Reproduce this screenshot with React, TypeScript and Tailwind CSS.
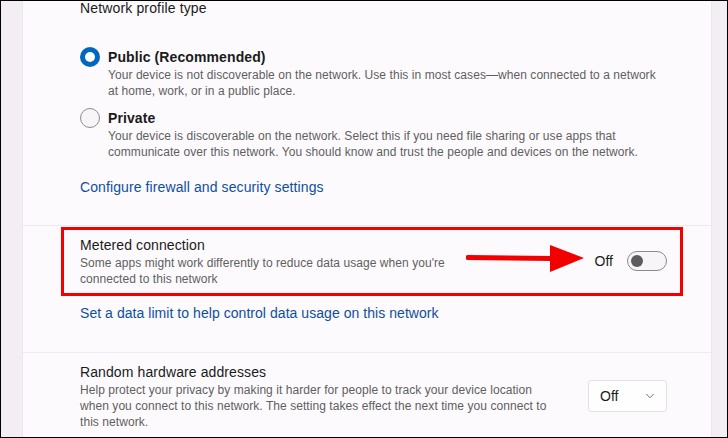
import React from 'react';
import { ChevronDown } from 'lucide-react';

const font = { fontFamily: '"Liberation Sans", Arial, sans-serif' };

const Radio: React.FC<{ checked?: boolean }> = ({ checked }) =>
  checked ? (
    <span className="flex h-5 w-5 shrink-0 items-center justify-center rounded-full bg-[#0067c0]">
      <span className="h-[10px] w-[10px] rounded-full bg-white" />
    </span>
  ) : (
    <span className="h-5 w-5 shrink-0 rounded-full border border-[#8d8d8d] bg-[#f7f5f7]" />
  );

const RadioOption: React.FC<{ checked?: boolean; title: string; lines: string[] }> = ({ checked, title, lines }) => (
  <div className="flex gap-2">
    <Radio checked={checked} />
    <div>
      <div className="text-[14px] leading-5 font-semibold tracking-[0.1px] text-[#1b1b1b]">{title}</div>
      {lines.map((l) => (
        <div key={l} className="text-[12px] leading-4 tracking-[0.06px] text-[#5f5f5f] whitespace-nowrap">{l}</div>
      ))}
    </div>
  </div>
);

export default function App() {
  return (
    <div style={font} className="flex h-[438px] w-[728px] overflow-hidden border border-black bg-[#f3eef4]">
      <div className="w-[21px] shrink-0" />
      <div className="flex w-[690px] shrink-0 flex-col border-x border-[#ece7ed] bg-[#fcfafc]">
        {/* profile type */}
        <div className="h-[224px] pl-[57px]">
          <div className="mt-[-3px] text-[14px] leading-5 tracking-[0.15px] text-[#1b1b1b]">Network profile type</div>
          <div className="mt-[29px]">
            <RadioOption
              checked
              title="Public (Recommended)"
              lines={[
                'Your device is not discoverable on the network. Use this in most cases\u2014when connected to a network',
                'at home, work, or in a public place.',
              ]}
            />
          </div>
          <div className="mt-[9px]">
            <RadioOption
              title="Private"
              lines={[
                'Your device is discoverable on the network. Select this if you need file sharing or use apps that',
                'communicate over this network. You should know and trust the people and devices on the network.',
              ]}
            />
          </div>
          <div className="mt-[17px] text-[14px] leading-5 tracking-[0.1px] text-[#0f4f9e]">Configure firewall and security settings</div>
        </div>
        <div className="h-px bg-[#efe9f0]" />

        {/* metered */}
        <div className="h-[126px] pl-[57px] pr-[44px]">
          <div className="relative mt-[8px] flex items-center pt-px">
            <div>
              <div className="text-[14px] leading-5 tracking-[0.1px] text-[#1b1b1b]">Metered connection</div>
              <div className="text-[12px] leading-4 tracking-[0.06px] text-[#5f5f5f]">
                Some apps might work differently to reduce data usage when you're
                <br />
                connected to this network
              </div>
            </div>
            <div className="ml-auto flex items-center gap-[14px]">
              <span className="text-[14px] leading-5 text-[#1b1b1b]">Off</span>
              <span className="flex h-5 w-10 items-center rounded-full border border-[#8a8a8a] bg-[#f7f5f7] pl-[3px]">
                <span className="h-3 w-3 rounded-full bg-[#5c5c5c]" />
              </span>
            </div>
            {/* annotation */}
            <div className="pointer-events-none absolute left-[-19px] top-[-7px] h-[69px] w-[622px] border-[3px] border-[#f20000]" />
            <svg className="absolute left-[386px] top-[11px]" width="120" height="28" viewBox="0 0 120 28">
              <path d="M2 12.5 L86 13.5" stroke="#f20000" strokeWidth="5" strokeLinecap="round" />
              <polygon points="84,0 118,13 84,27" fill="#f20000" />
            </svg>
          </div>
          <div className="mt-[16px] text-[14px] leading-5 tracking-[0.05px] text-[#0f4f9e]">Set a data limit to help control data usage on this network</div>
        </div>
        <div className="h-px bg-[#efe9f0]" />

        {/* random hardware */}
        <div className="flex pl-[57px] pr-[44px] pt-[9px]">
          <div>
            <div className="text-[14px] leading-5 tracking-[0.1px] text-[#1b1b1b]">Random hardware addresses</div>
            <div className="text-[12px] leading-4 tracking-[0.06px] text-[#5f5f5f] whitespace-nowrap">
              Help protect your privacy by making it harder for people to track your device location
              <br />
              when you connect to this network. The setting takes effect the next time you connect to
              <br />
              this network.
            </div>
          </div>
          <div className="ml-auto mt-[18px] flex h-8 w-[79px] items-center justify-between rounded-[3px] border border-[#e3e1e3] bg-[#fefefe] pl-[11px] pr-[9px]">
            <span className="text-[14px] text-[#1b1b1b]">Off</span>
            <ChevronDown size={14} strokeWidth={1.5} className="text-[#5f5f5f]" />
          </div>
        </div>
      </div>
      <div className="flex-1" />
    </div>
  );
}
